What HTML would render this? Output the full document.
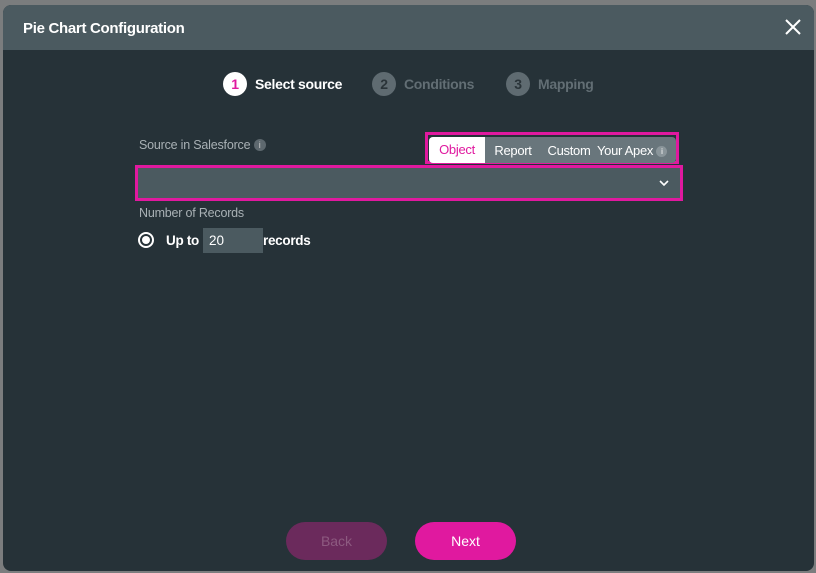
<!DOCTYPE html>
<html><head><style>
body{margin:0;width:816px;height:573px;background:#7b7d7e;font-family:"Liberation Sans",sans-serif;overflow:hidden;position:relative}
.m{position:absolute;left:3px;top:5px;width:811px;height:566px;background:#263238;border-radius:8px;overflow:hidden}
.h{height:45px;background:#4b5a60;position:relative}
.h .t{position:absolute;left:20px;top:15px;color:#fff;font-weight:bold;font-size:15px;letter-spacing:-0.3px}
.x{position:absolute;right:12px;top:13px}
.ab{position:absolute}
.step{position:absolute;top:72px;display:flex;align-items:center;font-size:14px;font-weight:bold;letter-spacing:-0.3px}
.c{width:24px;height:24px;border-radius:50%;display:flex;align-items:center;justify-content:center;margin-right:8px;font-size:14px}
</style></head><body>
<div class="m">
<div class="h"><div class="t">Pie Chart Configuration</div>
<svg class="x" width="18" height="18" viewBox="0 0 18 18"><path d="M2 2L16 16M16 2L2 16" stroke="#fff" stroke-width="2"/></svg></div>
</div>
<div class="step" style="left:223px"><div class="c" style="background:#fff;color:#e0199f">1</div><span style="color:#fff">Select source</span></div>
<div class="step" style="left:372px"><div class="c" style="background:#5f6b71;color:#2a3439">2</div><span style="color:#626e74">Conditions</span></div>
<div class="step" style="left:506px"><div class="c" style="background:#5f6b71;color:#2a3439">3</div><span style="color:#626e74">Mapping</span></div>
<div class="ab" style="left:139px;top:138px;color:#a9b1b5;font-size:12.5px;letter-spacing:-0.2px">Source in Salesforce <span style="display:inline-block;width:12px;height:12px;border-radius:50%;background:#5d686e;color:#ccc;font-size:9px;text-align:center;line-height:12px;vertical-align:1px">i</span></div>
<div class="ab" style="left:425px;top:132px;width:254px;height:32px;border:3px solid #e0199f;box-sizing:border-box"></div>
<div class="ab" style="left:429px;top:137px;width:247px;height:26px;background:#69767c;border-radius:4px;display:flex;align-items:center;font-size:13px;color:#fff;overflow:hidden;letter-spacing:-0.3px">
<div style="background:#fff;color:#e0199f;width:56px;height:26px;line-height:26px;text-align:center">Object</div>
<div style="width:56px;text-align:center">Report</div>
<div style="width:56px;text-align:center">Custom</div>
<div>Your Apex <span style="display:inline-block;width:11px;height:11px;border-radius:50%;background:#8a959a;font-size:8px;text-align:center;line-height:11px;vertical-align:1px">i</span></div></div>
<div class="ab" style="left:135px;top:165px;width:548px;height:36px;border:3px solid #e0199f;box-sizing:border-box;background:#4b5a60"></div>
<svg class="ab" style="left:659px;top:179px" width="10" height="8" viewBox="0 0 10 8"><path d="M1 2L5 6L9 2" stroke="#fff" stroke-width="1.6" fill="none"/></svg>
<div class="ab" style="left:139px;top:206px;color:#a9b1b5;font-size:12.5px;letter-spacing:-0.2px">Number of Records</div>
<div class="ab" style="left:138px;top:232px;width:12px;height:12px;border:2px solid #fff;border-radius:50%"><div style="width:8px;height:8px;margin:2px;border-radius:50%;background:#fff"></div></div>
<div class="ab" style="left:166px;top:233px;color:#fff;font-size:13.5px;font-weight:bold;letter-spacing:-0.3px">Up to</div>
<div class="ab" style="left:203px;top:228px;width:60px;height:25px;background:#4b5a60;color:#fff;font-size:13.5px;line-height:25px;box-sizing:border-box;padding-left:6px">20</div>
<div class="ab" style="left:263px;top:233px;color:#fff;font-size:13.5px;font-weight:bold;letter-spacing:-0.3px">records</div>
<div class="ab" style="left:286px;top:522px;width:101px;height:38px;border-radius:19px;background:#6b2a5c;color:#8d5a80;font-size:14px;text-align:center;line-height:38px">Back</div>
<div class="ab" style="left:415px;top:522px;width:101px;height:38px;border-radius:19px;background:#e0199f;color:#fff;font-size:14px;text-align:center;line-height:38px">Next</div>
</body></html>
